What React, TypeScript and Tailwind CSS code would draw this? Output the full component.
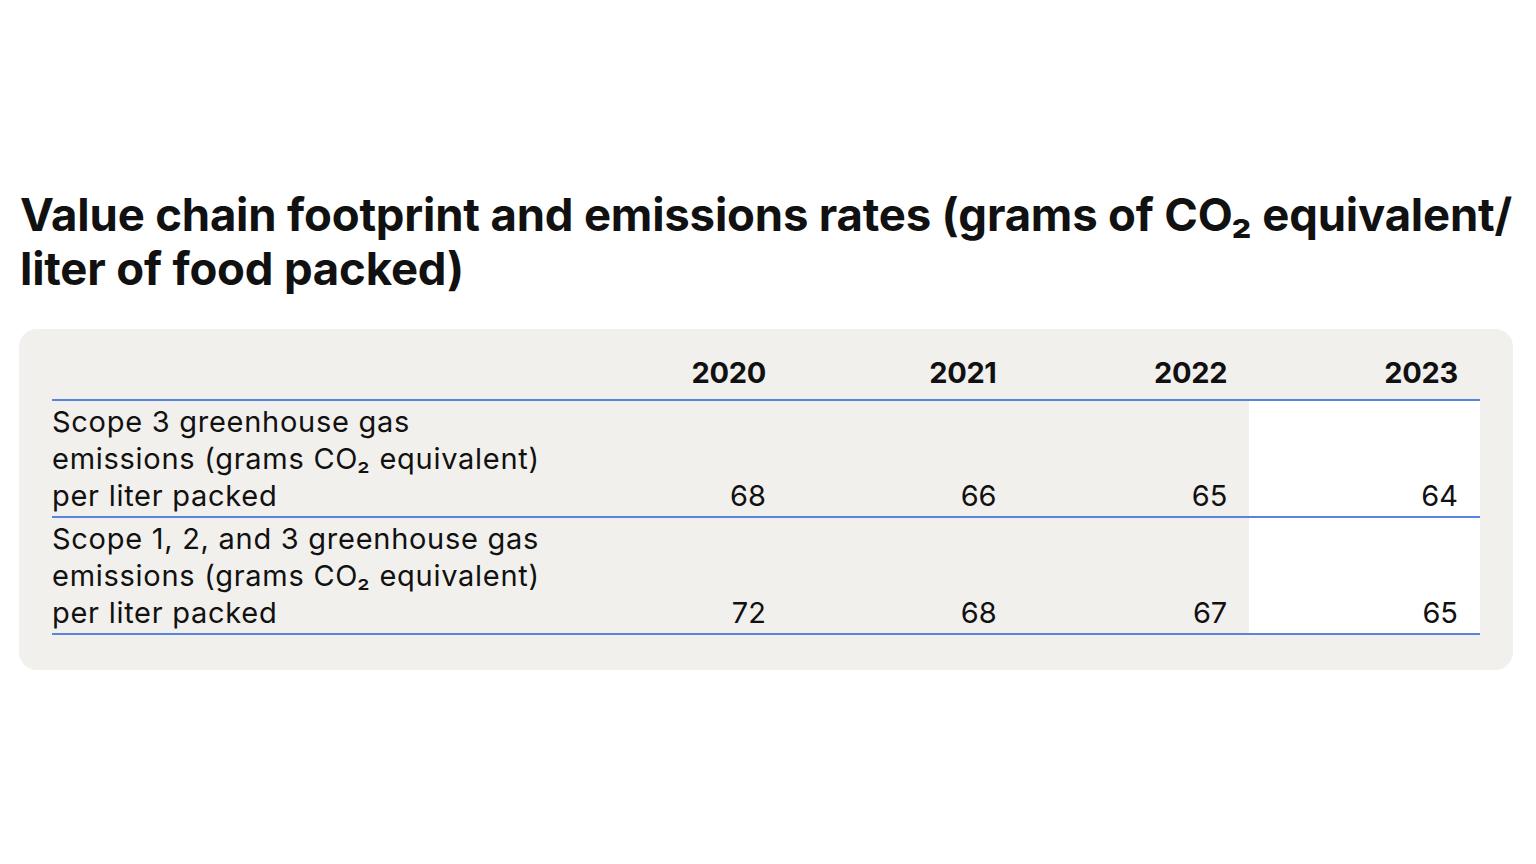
const rows = [
  { label: ["Scope 3 greenhouse gas", "emissions (grams CO₂ equivalent)", "per liter packed"], values: ["68", "66", "65", "64"] },
  { label: ["Scope 1, 2, and 3 greenhouse gas", "emissions (grams CO₂ equivalent)", "per liter packed"], values: ["72", "68", "67", "65"] },
];

const years = ["2020", "2021", "2022", "2023"];

export default function App() {
  return (
    <div className="min-h-[864px] w-[1536px] bg-white pt-[188px] text-[#111] [font-family:Inter,'Liberation_Sans',sans-serif]">
      <h1 className="pl-[20px] text-[45.5px] font-bold leading-[54px] tracking-[-0.004em]">
        Value chain footprint and emissions rates (grams of CO₂ equivalent/
        <br />
        liter of food packed)
      </h1>

      <div className="mx-[19px] mt-[33px] w-[1494px] rounded-[18px] bg-[#f2f0ed] px-[33px] pt-[26px] pb-[35px]">
        <table className="w-full border-collapse">
          <thead>
            <tr className="border-b-2 border-[#5a82e0]">
              <th className="w-[506px]" />
              {years.map((y) => (
                <th key={y} className="w-[231px] pr-[22px] pb-[8px] text-right text-[29px] font-bold leading-[36px] tracking-[-0.01em]">
                  {y}
                </th>
              ))}
            </tr>
          </thead>
          <tbody>
            {rows.map((row) => (
              <tr key={row.values.join()} className="border-b-2 border-[#5a82e0]">
                <td className="pt-[2px] pb-[2px] align-bottom text-[29px] leading-[37px] tracking-[0.025em]">
                  {row.label.map((line) => (
                    <div key={line}>{line}</div>
                  ))}
                </td>
                {row.values.map((v, i) => (
                  <td
                    key={i}
                    className={`pr-[22px] pb-[2px] text-right align-bottom text-[29px] leading-[37px] ${i === 3 ? "bg-white" : ""}`}
                  >
                    {v}
                  </td>
                ))}
              </tr>
            ))}
          </tbody>
        </table>
      </div>
    </div>
  );
}
